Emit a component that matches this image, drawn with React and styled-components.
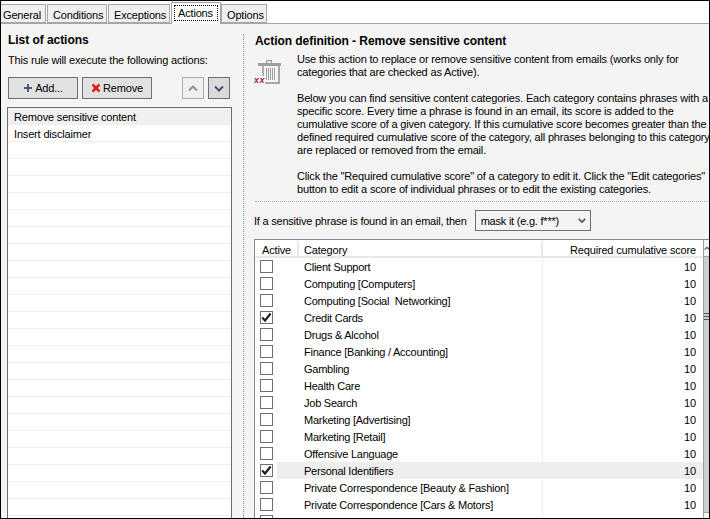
import React from "react";
import styled, { createGlobalStyle } from "styled-components";

const Global = createGlobalStyle`
  html, body { margin: 0; padding: 0; background: #000; }
  body { font-family: "Liberation Sans", Arial, sans-serif; font-size: 11px; letter-spacing: -0.17px; color: #000; }
  * { box-sizing: border-box; }
`;

const Frame = styled.div`
  width: 710px; height: 519px; border: 1px solid #000; background: #f4f4f4;
  display: flex; flex-direction: column; overflow: hidden;
`;
const TabStrip = styled.div`
  height: 23px; flex: none; display: flex; align-items: flex-end; background: #fff;
  border-bottom: 1px solid #a6a6a6;
`;
const Tab = styled.div`
  height: ${p => (p.$active ? "22px" : "19px")};
  width: ${p => p.$w}px;
  margin: ${p => (p.$active ? "0 0 -1px 0" : "0 1px 0 0")};
  background: ${p => (p.$active ? "#fff" : "#f0f0f0")};
  border: 1px solid #a6a6a6;
  border-bottom: ${p => (p.$active ? "none" : "1px solid #a6a6a6")};
  border-left: ${p => (p.$first ? "none" : "1px solid #a6a6a6")};
  padding: ${p => (p.$active ? "2px 2px 0" : p.$first ? "3px 0 0 2px" : "3px 0 0 5px")};
  line-height: 14px; white-space: nowrap;
`;
const TabFocus = styled.span`
  display: block; height: 16px; padding-left: 3px; line-height: 14px; border: 1px dotted #000;
`;
const Body = styled.div`flex: 1; display: flex; min-height: 0;`;
const LeftPanel = styled.div`
  width: 242px; flex: none; padding: 9px 11px 0 6px; display: flex; flex-direction: column;
  & > * { flex: none; }
`;
const Heading = styled.div`
  font-weight: 700; font-size: 12px; letter-spacing: -0.05px; line-height: 14px; white-space: nowrap;
  margin-left: ${p => p.$ml || 0}px;
`;
const Sub = styled.div`margin-top: 6px; line-height: 14px; padding-left: 1px; white-space: nowrap;`;
const Toolbar = styled.div`margin-top: 10px; display: flex; padding-left: 1px;`;
const Button = styled.div`
  width: 70px; height: 22px; margin-right: 4px; background: #e1e1e1; border: 1px solid #707070;
  display: flex; align-items: center; justify-content: center; gap: 2px; white-space: nowrap;
`;
const ArrowButton = styled.div`
  width: 22px; height: 22px; margin-left: ${p => p.$ml}px;
  background: ${p => (p.$off ? "#f0f0f0" : "#dadada")};
  border: 1px solid ${p => (p.$off ? "#adadad" : "#707070")};
  display: flex; align-items: center; justify-content: center;
`;
const ListBox = styled.div`
  margin-top: 8px; height: 420px; background: #fff; border: 1px solid #6e6e6e; overflow: hidden;
`;
const ListRow = styled.div`
  height: 17px; padding-left: 6px; line-height: 19px; white-space: nowrap;
  background: ${p => (p.$sel ? "#f0f0f0" : "#fff")};
  border-bottom: 1px solid #eeeeee;
`;
const RightPanel = styled.div`
  flex: 1; min-width: 0; margin-top: 10px; border-left: 1px dotted #8c8c8c; padding: 0 0 0 11px;
  display: flex; flex-direction: column; overflow: hidden;
  & > * { flex: none; }
`;
const Intro = styled.div`display: flex; margin-top: 5px;`;
const IconSlot = styled.div`width: 42px; flex: none; padding-top: 5px; margin-left: -1px; margin-right: 1px;`;
const TextBlock = styled.div`white-space: nowrap; line-height: 13px; letter-spacing: -0.17px;`;
const Para = styled.p`
  margin: 0 0 13px;
  &:last-child { margin-bottom: 5px; }
`;
const Line = styled.span`display: block;`;
const Dotted = styled.div`border-top: 1px dotted #b4b4b4;`;
const ChoiceRow = styled.div`
  height: 21px; margin: 8px 0 0 -1px; display: flex; align-items: center; white-space: nowrap; letter-spacing: -0.22px;
`;
const Select = styled.div`
  width: 116px; height: 21px; margin-left: 8px; border: 1px solid #707070; padding: 0 4px 0 5px;
  display: flex; align-items: center; justify-content: space-between; background: #f4f4f4;
`;
const TableBox = styled.div`
  margin: 8px 0 0 -1px; height: 290px; width: 456px; border-top: 1px solid #828790; border-left: 1px solid #828790;
  display: flex; background: #fff; overflow: hidden;
`;
const Grid = styled.div`flex: 1; min-width: 0; padding-top: 1px;`;
const HeadRow = styled.div`
  height: 17px; display: grid; grid-template-columns: 44px 244px 1fr; line-height: 18px;
  border-bottom: 2px solid #e8e8e8; background: #fff;
`;
const HeadCell = styled.div`
  padding: ${p => (p.$right ? "0 7px 0 0" : p.$first ? "0 0 0 7px" : "0 0 0 5px")};
  text-align: ${p => (p.$right ? "right" : "left")};
  border-right: ${p => (p.$right ? "none" : "2px solid #e8e8e8")}; white-space: nowrap;
`;
const Row = styled.div`
  height: 17px; display: grid; grid-template-columns: 22px 22px 244px 1fr; line-height: 19px;
  border-bottom: 1px solid #ececec; background: #fff;
`;
const CheckCell = styled.div`display: flex; justify-content: flex-start; padding: 2px 0 0 5px; background: #fff;`;
const Check = styled.div`
  width: 13px; height: 13px; border: 1px solid #707070; background: #fff;
  display: flex; align-items: center; justify-content: center;
`;
const Cell = styled.div`
  white-space: pre; background: ${p => (p.$hi ? "#eeeeee" : "#fff")};
  padding: ${p => (p.$right ? "0 7px 0 0" : p.$cat ? "0 0 0 5px" : "0")};
  text-align: ${p => (p.$right ? "right" : "left")};
  letter-spacing: ${p => (p.$cat ? "-0.24px" : "-0.17px")};
  border-right: ${p => (p.$sep ? "1px solid #ececec" : "none")};
`;
const Scrollbar = styled.div`
  width: 7px; flex: none; display: flex; flex-direction: column; border-left: 1px solid #a0a0a0; background: #cdcdcd;
`;
const ScrollBtn = styled.div`
  height: 17px; flex: none; background: #f4f4f4; border-${p => p.$edge}: 1px solid #a0a0a0;
  display: flex; align-items: center; overflow: hidden;
`;
const Thumb = styled.div`flex: 1; background: #cdcdcd; padding-top: 56px;`;
const Grip = styled.div`width: 6px; height: 7px; background: repeating-linear-gradient(#555 0 1px, transparent 1px 3px);`;

const Plus = () => (
  <svg width="10" height="10" viewBox="0 0 10 10"><path d="M4 1h2v3h3v2H6v3H4V6H1V4h3z" fill="#4a5c6e"/></svg>
);
const RedX = () => (
  <svg width="10" height="10" viewBox="0 0 10 10"><path d="M1.5 1.5l7 7M8.5 1.5l-7 7" stroke="#d81e1e" strokeWidth="2.5" fill="none"/></svg>
);
const Chevron = ({ up, color, w = 10 }) => (
  <svg width={w} height="7" viewBox="0 0 10 7">
    <path d={up ? "M1 5.5l4-4 4 4" : "M1 1.5l4 4 4-4"} stroke={color} strokeWidth="2" fill="none"/>
  </svg>
);
const Tick = () => (
  <svg width="11" height="11" viewBox="0 0 11 11"><path d="M1.2 5.5l2.8 3 5.6-7" stroke="#222" strokeWidth="2.2" fill="none"/></svg>
);
const Trash = () => (
  <svg width="28" height="28" viewBox="0 0 28 28" style={{ display: "block" }}>
    <path d="M4 5h23v3H4z M12 2h6v3h-1.2V3.2h-3.6V5H12z" fill="#a0a0a0"/>
    <path d="M9 8v10" stroke="#b0b0b0" strokeWidth="2" fill="none"/>
    <path d="M25 8v17H11" stroke="#a8a8a8" strokeWidth="2" fill="none"/>
    <path d="M12.5 10v12M14.5 10v12M16.5 10v12M18.5 10v12M20.5 10v12" stroke="#a0a0a0" strokeWidth="1" fill="none"/>
    <text x="0" y="25" fontFamily="Liberation Sans, sans-serif" fontSize="9" letterSpacing="0.4" fontStyle="italic" fontWeight="700" fill="#b5222a">xx</text>
  </svg>
);

const categories = [
  ["Client Support"], ["Computing [Computers]"], ["Computing [Social  Networking]"], ["Credit Cards", true],
  ["Drugs & Alcohol"], ["Finance [Banking / Accounting]"], ["Gambling"], ["Health Care"], ["Job Search"],
  ["Marketing [Advertising]"], ["Marketing [Retail]"], ["Offensive Language"], ["Personal Identifiers", true, true],
  ["Private Correspondence [Beauty & Fashion]"], ["Private Correspondence [Cars & Motors]"], ["Private Correspondence [Family]"],
];

export default function App() {
  return (
    <Frame>
      <Global />
      <TabStrip>
        <Tab $first $w={45}>General</Tab>
        <Tab $w={60}>Conditions</Tab>
        <Tab $w={62}>Exceptions</Tab>
        <Tab $active $w={50}><TabFocus>Actions</TabFocus></Tab>
        <Tab $w={46}>Options</Tab>
      </TabStrip>
      <Body>
        <LeftPanel>
          <Heading $ml={1}>List of actions</Heading>
          <Sub>This rule will execute the following actions:</Sub>
          <Toolbar>
            <Button><Plus />Add...</Button>
            <Button><RedX />Remove</Button>
            <ArrowButton $off $ml={26}><Chevron up color="#8d979f" /></ArrowButton>
            <ArrowButton $ml={4}><Chevron color="#44596e" /></ArrowButton>
          </Toolbar>
          <ListBox>
            <ListRow $sel>Remove sensitive content</ListRow>
            <ListRow>Insert disclaimer</ListRow>
            {Array.from({ length: 23 }, (_, i) => <ListRow key={i} />)}
          </ListBox>
        </LeftPanel>
        <RightPanel>
          <Heading>Action definition - Remove sensitive content</Heading>
          <Intro>
            <IconSlot><Trash /></IconSlot>
            <TextBlock>
              <Para>
                <Line>Use this action to replace or remove sensitive content from emails (works only for</Line>
                <Line>categories that are checked as Active).</Line>
              </Para>
              <Para>
                <Line>Below you can find sensitive content categories. Each category contains phrases with a</Line>
                <Line>specific score. Every time a phrase is found in an email, its score is added to the</Line>
                <Line>cumulative score of a given category. If this cumulative score becomes greater than the</Line>
                <Line>defined required cumulative score of the category, all phrases belonging to this category</Line>
                <Line>are replaced or removed from the email.</Line>
              </Para>
              <Para>
                <Line>Click the "Required cumulative score" of a category to edit it. Click the "Edit categories"</Line>
                <Line>button to edit a score of individual phrases or to edit the existing categories.</Line>
              </Para>
            </TextBlock>
          </Intro>
          <Dotted />
          <ChoiceRow>
            If a sensitive phrase is found in an email, then
            <Select>mask it (e.g. f***)<Chevron color="#555" w={8} /></Select>
          </ChoiceRow>
          <TableBox>
            <Grid>
              <HeadRow>
                <HeadCell $first>Active</HeadCell>
                <HeadCell>Category</HeadCell>
                <HeadCell $right>Required cumulative score</HeadCell>
              </HeadRow>
              {categories.map(([name, on, hi]) => (
                <Row key={name}>
                  <CheckCell><Check>{on && <Tick />}</Check></CheckCell>
                  <Cell $hi={hi} />
                  <Cell $hi={hi} $cat $sep>{name}</Cell>
                  <Cell $hi={hi} $right>10</Cell>
                </Row>
              ))}
            </Grid>
            <Scrollbar>
              <ScrollBtn $edge="bottom"><Chevron up color="#555" /></ScrollBtn>
              <Thumb><Grip /></Thumb>
              <ScrollBtn $edge="top"><Chevron color="#555" /></ScrollBtn>
            </Scrollbar>
          </TableBox>
        </RightPanel>
      </Body>
    </Frame>
  );
}
